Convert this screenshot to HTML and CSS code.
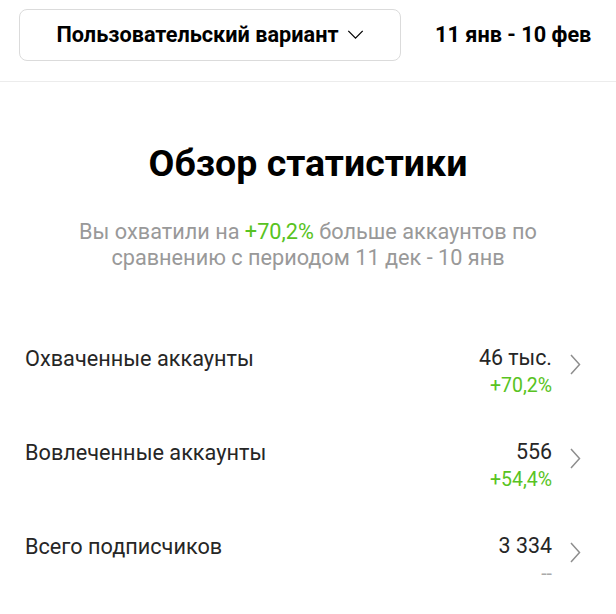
FILE: index.html
```html
<!DOCTYPE html>
<html lang="ru">
<head>
<meta charset="utf-8">
<link rel="stylesheet" href="styles.css">
</head>
<body>
<header class="topbar">
  <button class="preset">
    <span>Пользовательский вариант</span>
    <svg class="caret" width="18" height="10" viewBox="0 0 18 10"><path d="M1 1 L9 9 L17 1" fill="none" stroke="#000" stroke-width="1.4"/></svg>
  </button>
  <div class="range">11 янв - 10 фев</div>
</header>
<main class="content">
  <h1 class="title">Обзор статистики</h1>
  <p class="summary">Вы охватили на <span class="up">+70,2%</span> больше аккаунтов по сравнению с периодом 11 дек - 10 янв</p>
  <ul class="stats">
    <li class="row">
      <span class="label">Охваченные аккаунты</span>
      <span class="vals"><span class="val">46 тыс.</span><span class="delta up">+70,2%</span></span>
      <svg class="chev" width="11" height="21" viewBox="0 0 11 21"><path d="M1 1 L9.5 10.5 L1 20" fill="none" stroke="#8e8e8e" stroke-width="1.5"/></svg>
    </li>
    <li class="row">
      <span class="label">Вовлеченные аккаунты</span>
      <span class="vals"><span class="val">556</span><span class="delta up">+54,4%</span></span>
      <svg class="chev" width="11" height="21" viewBox="0 0 11 21"><path d="M1 1 L9.5 10.5 L1 20" fill="none" stroke="#8e8e8e" stroke-width="1.5"/></svg>
    </li>
    <li class="row">
      <span class="label">Всего подписчиков</span>
      <span class="vals"><span class="val">3 334</span><span class="delta none">--</span></span>
      <svg class="chev" width="11" height="21" viewBox="0 0 11 21"><path d="M1 1 L9.5 10.5 L1 20" fill="none" stroke="#8e8e8e" stroke-width="1.5"/></svg>
    </li>
  </ul>
</main>
</body>
</html>
```
FILE: styles.css
```css
* { box-sizing: border-box; }
html, body { margin: 0; padding: 0; background: #fff; }
body {
  font-family: Roboto, "Noto Sans", sans-serif;
  color: #262626;
  width: 616px;
  height: 614px;
  overflow: hidden;
}
.topbar {
  display: flex;
  align-items: flex-start;
  padding: 9px 0 0 19px;
  height: 82px;
  border-bottom: 1px solid #ececec;
}
.preset {
  width: 382px;
  height: 52px;
  border: 1.5px solid #dbdbdb;
  border-radius: 8px;
  background: #fff;
  font-family: inherit;
  font-size: 21.7px;
  font-weight: 700;
  color: #000;
  display: flex;
  align-items: center;
  justify-content: center;
  gap: 8px;
  padding: 0 0 2px;
}
.caret { width: 17px; height: 9px; }
.range {
  margin-left: 34px;
  height: 52px;
  display: flex;
  align-items: center;
  font-size: 21.7px;
  font-weight: 700;
  color: #000;
  padding-bottom: 2px;
}
.title {
  margin: 58px 0 0;
  text-align: center;
  font-size: 37.5px;
  font-weight: 700;
  color: #000;
  line-height: 46px;
}
.summary {
  margin: 33px auto 0;
  width: 500px;
  text-align: center;
  font-size: 21.7px;
  line-height: 26px;
  color: #999;
}
.up { color: #58c322; }
.stats {
  list-style: none;
  margin: 74px 0 0;
  padding: 0 35px 0 25px;
}
.row {
  display: flex;
  align-items: flex-start;
  height: 94px;
}
.label {
  flex: 1;
  font-size: 21.7px;
  line-height: 26px;
  margin-top: 1px;
}
.vals {
  display: flex;
  flex-direction: column;
  align-items: flex-end;
}
.val { font-size: 21.4px; line-height: 26px; }
.delta { font-size: 19.5px; line-height: 24px; margin-top: 3px; }
.none { color: #aaa; }
.chev { margin: 9px 0 0 18px; }
```
